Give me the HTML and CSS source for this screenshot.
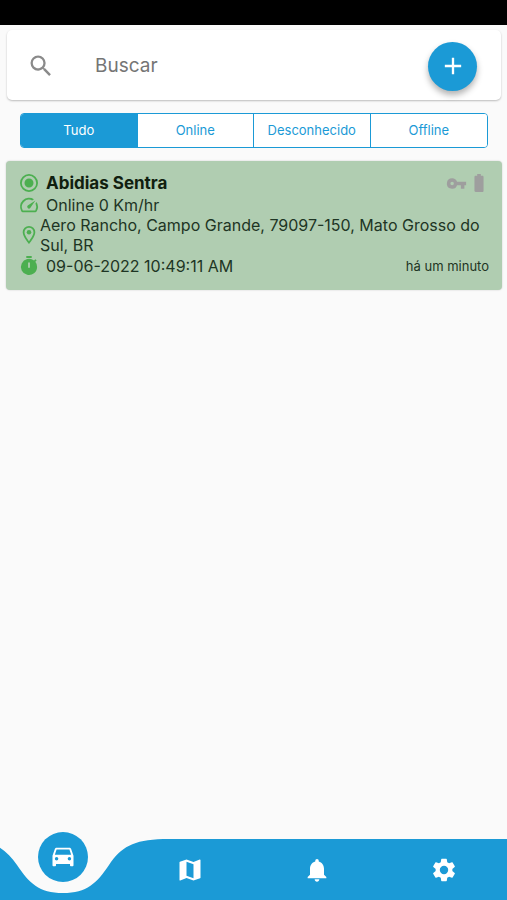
FILE: index.html
```html
<!DOCTYPE html>
<html lang="pt-BR">
<head>
    <meta charset="UTF-8">
    <meta name="viewport" content="width=device-width, initial-scale=1.0">
    <title>Dispositivos</title>
    <link rel="stylesheet" href="styles.css">
</head>
<body>
    <div class="status-bar"></div>
    <form class="search" role="search">
        <label for="search" aria-label="Buscar">
            <svg class="icon-search" viewBox="0 0 24 24"><path d="M15.5 14h-.79l-.28-.27A6.47 6.47 0 0 0 16 9.5 6.5 6.5 0 1 0 9.5 16c1.61 0 3.09-.59 4.23-1.57l.27.28v.79l5 4.99L20.49 19l-4.99-5zm-6 0C7.01 14 5 11.99 5 9.5S7.01 5 9.5 5 14 7.01 14 9.5 11.99 14 9.5 14z"/></svg>
        </label>
        <input id="search" type="text" placeholder="Buscar">
        <button class="add" type="button" aria-label="Adicionar">
            <svg viewBox="0 0 24 24"><path d="M19 13h-6v6h-2v-6H5v-2h6V5h2v6h6v2z"/></svg>
        </button>
    </form>
    <div class="filters">
        <button class="filter active" type="button">Tudo</button>
        <button class="filter" type="button">Online</button>
        <button class="filter" type="button">Desconhecido</button>
        <button class="filter" type="button">Offline</button>
    </div>
    <main>
        <article class="device">
            <div class="row">
                <svg class="icon" viewBox="2 2 20 20"><path d="M12 7a5 5 0 1 0 0 10 5 5 0 0 0 0-10zm0-5a10 10 0 1 0 0 20 10 10 0 0 0 0-20zm0 18a8 8 0 1 1 0-16 8 8 0 0 1 0 16z"/></svg>
                <h2>Abidias Sentra</h2>
                <div class="state">
                    <svg class="icon-key" viewBox="0 0 24 24"><path d="M12.65 10A5.99 5.99 0 0 0 7 6a6 6 0 1 0 5.65 8H17v4h4v-4h2v-4H12.65zM7 14a2 2 0 1 1 0-4 2 2 0 0 1 0 4z"/></svg>
                    <svg class="icon-battery" viewBox="6 1 12 22"><path d="M15.67 4H14V2h-4v2H8.33C7.6 4 7 4.6 7 5.33v15.33C7 21.4 7.6 22 8.33 22h7.33c.74 0 1.34-.6 1.34-1.33V5.33C17 4.6 16.4 4 15.67 4z"/></svg>
                </div>
            </div>
            <div class="row">
                <svg class="icon" viewBox="2 2 20 20"><path d="M20.4 8.6l-1.2 1.8a8 8 0 0 1-.2 7.6H5.1A8 8 0 0 1 15.6 6.9l1.9-1.3A10 10 0 0 0 3.4 19a2 2 0 0 0 1.7 1h13.8a2 2 0 0 0 1.7-1 10 10 0 0 0-.2-10.4zM10.6 15.4a2 2 0 0 0 2.8 0l5.7-8.5-8.5 5.7a2 2 0 0 0 0 2.8z"/></svg>
                <p>Online 0 Km/hr</p>
            </div>
            <div class="row address">
                <svg class="icon" viewBox="2 2 20 20"><path d="M12 2a7 7 0 0 0-7 7c0 5.25 7 13 7 13s7-7.75 7-13a7 7 0 0 0-7-7zM7 9a5 5 0 0 1 10 0c0 2.88-2.88 7.19-5 9.88C9.92 16.21 7 11.85 7 9z"/><circle cx="12" cy="9" r="2.5"/></svg>
                <p>Aero Rancho, Campo Grande, 79097-150, Mato Grosso do Sul, BR</p>
            </div>
            <div class="row">
                <svg class="icon" viewBox="2 2 20 20"><path d="M15 1H9v2h6V1zm4.03 6.39l1.42-1.42c-.43-.51-.9-.99-1.41-1.41l-1.42 1.42A9 9 0 1 0 21 13a8.96 8.96 0 0 0-1.97-5.61zM13 14h-2V8h2v6z"/></svg>
                <p>09-06-2022 10:49:11 AM</p>
                <span class="ago">há um minuto</span>
            </div>
        </article>
    </main>
    <nav class="tabs">
        <a class="tab current" href="#dispositivos" aria-label="Dispositivos">
            <svg class="notch" viewBox="0 0 200 54"><path d="M0 0C30 1 42 9 54 26C66 44 76 54 100 54S134 44 146 26S170 1 200 0z"/></svg>
            <span class="bubble">
                <svg viewBox="0 0 24 24"><path d="M18.92 5.01C18.72 4.42 18.16 4 17.5 4h-11c-.66 0-1.21.42-1.42 1.01L3 11v8c0 .55.45 1 1 1h1c.55 0 1-.45 1-1v-1h12v1c0 .55.45 1 1 1h1c.55 0 1-.45 1-1v-8l-2.08-5.99zM6.5 15a1.5 1.5 0 1 1 0-3 1.5 1.5 0 0 1 0 3zm11 0a1.5 1.5 0 1 1 0-3 1.5 1.5 0 0 1 0 3zM5 10l1.5-4.5h11L19 10H5z"/></svg>
            </span>
        </a>
        <a class="tab" href="#mapa" aria-label="Mapa">
            <svg viewBox="0 0 24 24"><path d="M20.5 3l-.16.03L15 5.1 9 3 3.36 4.9c-.21.07-.36.25-.36.48V20.5c0 .28.22.5.5.5l.16-.03L9 18.9l6 2.1 5.64-1.9c.21-.07.36-.25.36-.48V3.5c0-.28-.22-.5-.5-.5zM15 19l-6-2.11V5l6 2.11V19z"/></svg>
        </a>
        <a class="tab" href="#alertas" aria-label="Alertas">
            <svg viewBox="0 0 24 24"><path d="M12 22c1.1 0 2-.9 2-2h-4c0 1.1.89 2 2 2zm6-6v-5c0-3.07-1.64-5.64-4.5-6.32V4a1.5 1.5 0 0 0-3 0v.68C7.63 5.36 6 7.92 6 11v5l-2 2v1h16v-1l-2-2z"/></svg>
        </a>
        <a class="tab" href="#ajustes" aria-label="Ajustes">
            <svg viewBox="0 0 24 24"><path d="M19.14 12.94c.04-.3.06-.61.06-.94 0-.32-.02-.64-.07-.94l2.03-1.58c.18-.14.23-.41.12-.61l-1.92-3.32c-.12-.22-.37-.29-.59-.22l-2.39.96c-.5-.38-1.03-.7-1.62-.94l-.36-2.54c-.04-.24-.24-.41-.48-.41h-3.84c-.24 0-.43.17-.47.41l-.36 2.54c-.59.24-1.13.57-1.62.94l-2.39-.96c-.22-.08-.47 0-.59.22L2.74 8.87c-.12.21-.08.47.12.61l2.03 1.58c-.05.3-.09.63-.09.94s.02.64.07.94l-2.03 1.58c-.18.14-.23.41-.12.61l1.92 3.32c.12.22.37.29.59.22l2.39-.96c.5.38 1.03.7 1.62.94l.36 2.54c.05.24.24.41.48.41h3.84c.24 0 .44-.17.47-.41l.36-2.54c.59-.24 1.13-.56 1.62-.94l2.39.96c.22.08.47 0 .59-.22l1.92-3.32c.12-.22.07-.47-.12-.61l-2.01-1.58zM12 15.6a3.6 3.6 0 1 1 0-7.2 3.6 3.6 0 0 1 0 7.2z"/></svg>
        </a>
    </nav>
</body>
</html>
```
FILE: styles.css
```css
* {
    box-sizing: border-box;
}
body {
    display: flex;
    flex-direction: column;
    min-height: 100vh;
    margin: 0;
    background-color: #fafafa;
    color: #1e3524;
    font-family: Inter, Roboto, sans-serif;
    font-size: 16px;
    line-height: 20px;
}
svg {
    display: block;
    fill: currentColor;
}
button {
    font: inherit;
    cursor: pointer;
}
.status-bar {
    height: 25px;
    background-color: black;
}
.search {
    display: flex;
    align-items: center;
    height: 70px;
    margin: 5px 6px 0 7px;
    padding: 2px 24px 0 20px;
    background-color: white;
    border-radius: 5px;
    box-shadow: 0 1px 2px rgba(0, 0, 0, 0.25);
}
.icon-search {
    width: 28px;
    height: 28px;
    color: #8a8a8a;
}
.search input {
    flex: 1;
    min-width: 0;
    margin-left: 40px;
    padding: 0;
    border: none;
    outline: none;
    background: none;
    font: inherit;
    font-size: 19px;
}
.search input::placeholder {
    color: #757575;
    opacity: 1;
}
.add {
    display: grid;
    place-items: center;
    width: 49px;
    height: 49px;
    padding: 0;
    border: none;
    border-radius: 50%;
    background-color: #1b9ad6;
    color: white;
    box-shadow: 0 4px 6px rgba(0, 0, 0, 0.3);
}
.add svg {
    width: 28px;
    height: 28px;
}
.filters {
    display: grid;
    grid-template-columns: repeat(4, 1fr);
    height: 35px;
    margin: 13px 19px 0 20px;
    border: 1px solid #1b9ad6;
    border-radius: 4px;
    overflow: hidden;
}
.filter {
    padding: 0 0 2px;
    border: none;
    border-right: 1px solid #1b9ad6;
    background-color: white;
    color: #1b9ad6;
    font-size: 13px;
}
.filter:last-child {
    border-right: none;
}
.filter.active {
    background-color: #1b9ad6;
    color: white;
}
main {
    flex: 1;
    padding: 13px 5px 0 6px;
}
.device {
    padding: 11px 13px 14px 14px;
    border-radius: 4px;
    background-color: #b0cdb1;
    box-shadow: 0 0 2px rgba(0, 0, 0, 0.2);
}
.row {
    display: flex;
    align-items: center;
    gap: 8px;
    min-height: 21px;
}
.row:first-child {
    min-height: 22px;
}
.row h2,
.row p {
    margin: 0;
    font-size: 16px;
}
.row h2 {
    color: #10200f;
    font-size: 17px;
    font-weight: 700;
}
.icon {
    flex: none;
    width: 18px;
    height: 18px;
    overflow: visible;
    color: #4caf50;
}
.address {
    gap: 2px;
}
.state {
    display: flex;
    align-items: center;
    gap: 6px;
    margin-left: auto;
    padding-right: 4px;
    color: #9e9e9e;
}
.icon-key {
    width: 21px;
    height: 21px;
}
.icon-battery {
    width: 12px;
    height: 20px;
}
.ago {
    margin-left: auto;
    font-size: 13px;
}
.tabs {
    display: grid;
    grid-template-columns: repeat(4, 1fr);
    height: 61px;
    background-color: #1b9ad6;
}
.tab {
    display: grid;
    place-items: center;
    color: white;
}
.tab svg {
    width: 28px;
    height: 28px;
}
.current {
    position: relative;
}
.tab .notch {
    position: absolute;
    top: 0;
    left: 50%;
    width: 200px;
    height: 54px;
    margin-left: -100px;
    color: #fafafa;
}
.bubble {
    position: absolute;
    top: -7px;
    left: 50%;
    display: grid;
    place-items: center;
    width: 50px;
    height: 50px;
    margin-left: -25px;
    border-radius: 50%;
    background-color: #1b9ad6;
}
```
